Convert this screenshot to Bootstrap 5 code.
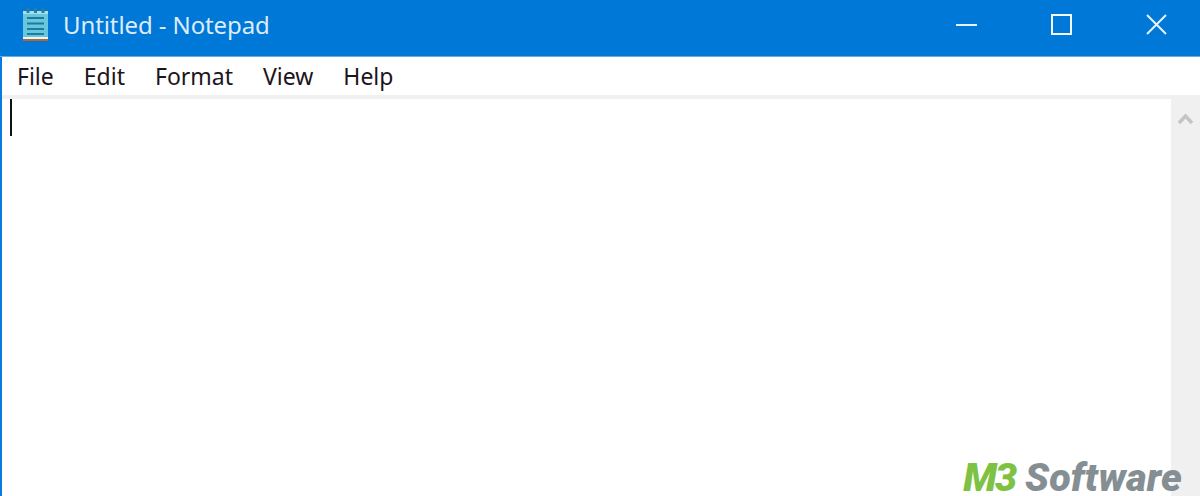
<!DOCTYPE html>
<html lang="en">
<head>
<meta charset="utf-8">
<title>Untitled - Notepad</title>
<link href="https://cdn.jsdelivr.net/npm/bootstrap@5.3.0/dist/css/bootstrap.min.css" rel="stylesheet">
<style>
html,body{height:496px;overflow:hidden;background:#fff}
.win-frame{height:496px;border-left:2px solid #0a7bdc;font-family:"Noto Sans","Open Sans",sans-serif}
.title-bar{height:48px;background:#0078d7;margin-left:-2px;padding-left:23px;padding-bottom:8px;border-bottom:1px solid #66aee8;box-sizing:content-box}
.title-text{color:#dcecfb;font-size:24px;margin-left:15px;line-height:1;letter-spacing:-.1px;padding-top:2px}
.win-btns{margin-left:auto;padding-right:33px;gap:74px}
.menu-row{height:38px;gap:30px;padding-left:15px;font-size:23px;color:#1c1420;line-height:1}
.menu-gap{height:4px;background:#f0f0f0}
.edit-area{min-height:0}
.edit-pane{position:relative}
.caret-bar{position:absolute;left:8px;top:0;width:2px;height:37px;background:#111}
.scroll-rail{width:29px;background:#f0f0f0;padding-top:13px}
.brand-mark{position:absolute;right:18px;bottom:-2px;font-family:Roboto,"Liberation Sans",sans-serif;font-weight:900;font-style:italic;font-size:39.500px;line-height:40px;letter-spacing:.15px;color:#858f93;white-space:nowrap}
.brand-mark b{color:#7dc242;font-weight:900;letter-spacing:-2px}
</style>
</head>
<body>
<div class="win-frame d-flex flex-column">
  <div class="title-bar d-flex align-items-center">
    <svg width="25" height="33" viewBox="0 0 25 33" aria-hidden="true">
      <rect x="0" y="3" width="25" height="27" fill="#69c6dc"/>
      <rect x="0" y="3" width="25" height="3" fill="#a5e0ee"/>
      <path d="M5 0v5M12.500 0v5M20 0v5" stroke="#2c7d9c" stroke-width="3"/>
      <path d="M4 10h17M4 15.500h17M4 21h17M4 26h17" stroke="#1a7d9b" stroke-width="2.200"/>
      <rect x="0" y="29" width="25" height="2" fill="#e8f6fa"/>
      <rect x="0" y="31" width="25" height="2" fill="#b9622c"/>
    </svg>
    <span class="title-text">Untitled - Notepad</span>
    <div class="win-btns d-flex align-items-center">
      <svg width="21" height="21" viewBox="0 0 21 21" aria-hidden="true"><path d="M0 11h21" stroke="#e6f2fc" stroke-width="2"/></svg>
      <svg width="21" height="21" viewBox="0 0 21 21" aria-hidden="true"><rect x="1" y="1" width="19" height="19" fill="none" stroke="#f2f8fd" stroke-width="2"/></svg>
      <svg width="21" height="21" viewBox="0 0 21 21" aria-hidden="true"><path d="M1 1l19 19M20 1L1 20" stroke="#e6f2fc" stroke-width="2"/></svg>
    </div>
  </div>
  <div class="menu-row d-flex align-items-center bg-white">
    <span>File</span><span>Edit</span><span>Format</span><span>View</span><span>Help</span>
  </div>
  <div class="menu-gap"></div>
  <div class="edit-area flex-grow-1 d-flex">
    <div class="edit-pane flex-grow-1 bg-white"><div class="caret-bar"></div></div>
    <div class="scroll-rail d-flex justify-content-center align-items-start">
      <svg width="17" height="13" viewBox="0 0 17 13" aria-hidden="true"><path d="M2 11l6.500-7 6.500 7" fill="none" stroke="#c4c4c4" stroke-width="3.500"/></svg>
    </div>
  </div>
</div>
<div class="brand-mark"><b>M3</b> Software</div>
</body>
</html>
